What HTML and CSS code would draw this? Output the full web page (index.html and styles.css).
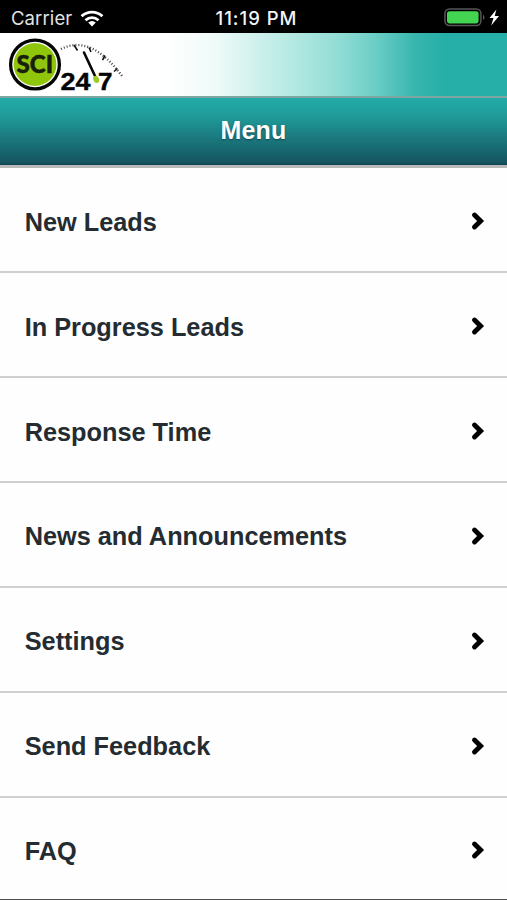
FILE: index.html
```html
<!DOCTYPE html>
<html lang="en">
<head>
<meta charset="utf-8">
<title>Menu</title>
<link rel="stylesheet" href="styles.css">
</head>
<body>
<div class="status">
  <div class="carrier">
    <span>Carrier</span>
    <svg width="24" height="17" viewBox="0 0 24 17" fill="none" stroke="#fff" stroke-width="2.9">
      <path d="M1.6 6.2C7.5.7 16.5.7 22.4 6.2"/>
      <path d="M5.5 10.2C9.3 6.7 14.7 6.7 18.5 10.2"/>
      <path d="M8.2 12.6Q12 9.4 15.8 12.6L12 16.5Z" fill="#fff" stroke="none"/>
    </svg>
  </div>
  <div class="time">11:19 PM</div>
  <div class="power">
    <svg width="56" height="20" viewBox="0 0 56 20">
      <rect x=".9" y="1" width="36" height="16.6" rx="4.5" fill="none" stroke="#555" stroke-width="1.5"/>
      <rect x="3" y="3.2" width="31.6" height="12.2" rx="2.3" fill="#43d551"/>
      <path d="M39 6.5Q42.2 9.3 39 12Z" fill="#555"/>
      <path d="M52.4 1.5L45.5 10.1H49.5L47.2 17.6L55 8H50.7Z" fill="#fff"/>
    </svg>
  </div>
</div>
<header class="brand">
  <svg width="130" height="63" viewBox="0 33 130 63">
    <circle cx="35" cy="64.5" r="24.4" fill="#fff" stroke="#050505" stroke-width="3.3"/>
    <circle cx="35" cy="64.5" r="21.4" fill="#8fc50a"/>
    <text class="logo-sci" x="34.7" y="73" text-anchor="middle" textLength="36.5" lengthAdjust="spacingAndGlyphs">SCI</text>
    <path class="dial" d="M61 49Q91 34 122 76"/>
    <path d="M74 45L77.5 50.5M89 47.5L91 52M105 55.5L102.5 60M117.5 68.5L114 71.5" stroke="#111" stroke-width="1.6"/>
    <path d="M84 52.5L95 76" stroke="#050505" stroke-width="2.6" stroke-linecap="round"/>
    <text class="logo-num" x="60.5" y="90" textLength="30" lengthAdjust="spacingAndGlyphs">24</text>
    <text class="logo-num" x="98" y="90" textLength="14.5" lengthAdjust="spacingAndGlyphs">7</text>
    <ellipse cx="96.2" cy="79.4" rx="2.8" ry="3.7" transform="rotate(-24 96.2 79.4)" fill="#9cc922"/>
  </svg>
</header>
<h1 class="title">Menu</h1>
<nav class="menu">
  <a class="item"><span>New Leads</span><svg class="chev" viewBox="0 0 14 20"><path d="M3.5 4L9.6 10L3.5 16"/></svg></a>
  <a class="item"><span>In Progress Leads</span><svg class="chev" viewBox="0 0 14 20"><path d="M3.5 4L9.6 10L3.5 16"/></svg></a>
  <a class="item"><span>Response Time</span><svg class="chev" viewBox="0 0 14 20"><path d="M3.5 4L9.6 10L3.5 16"/></svg></a>
  <a class="item"><span>News and Announcements</span><svg class="chev" viewBox="0 0 14 20"><path d="M3.5 4L9.6 10L3.5 16"/></svg></a>
  <a class="item"><span>Settings</span><svg class="chev" viewBox="0 0 14 20"><path d="M3.5 4L9.6 10L3.5 16"/></svg></a>
  <a class="item"><span>Send Feedback</span><svg class="chev" viewBox="0 0 14 20"><path d="M3.5 4L9.6 10L3.5 16"/></svg></a>
  <a class="item"><span>FAQ</span><svg class="chev" viewBox="0 0 14 20"><path d="M3.5 4L9.6 10L3.5 16"/></svg></a>
</nav>
</body>
</html>
```
FILE: styles.css
```css
* { box-sizing: border-box; }
body {
  margin: 0;
  height: 900px;
  overflow: hidden;
  display: flex;
  flex-direction: column;
  background: #fefefe;
  font-family: "Liberation Sans", Arial, sans-serif;
}
svg { display: block; flex: none; }
.status {
  height: 33px;
  flex: none;
  display: grid;
  grid-template-columns: 1fr auto 1fr;
  align-items: center;
  padding: 3px 7px 0 11px;
  background: #000;
  color: #fff;
  font: 18.5px/30px Inter, sans-serif;
}
.carrier { display: flex; align-items: center; gap: 8px; color: #e4e4e4; letter-spacing: .1px; }
.time { margin-left: 2px; font-weight: 500; font-size: 18.5px; letter-spacing: 1px; color: #f3f3f3; }
.power { display: flex; justify-content: flex-end; }
.brand {
  height: 63px;
  flex: none;
  background: linear-gradient(90deg, #fff 0, #fff 165px, #effbf9 215px, #c5eee9 270px, #92ddd6 338px, #6bcec6 375px, #37b6ae 415px, #25afa8 445px);
}
.logo-sci { font: 900 24px Lato, sans-serif; fill: #18200c; stroke: #18200c; stroke-width: .5px; }
.logo-num { font: bold 24px "Liberation Sans", sans-serif; fill: #050505; stroke: #050505; stroke-width: .4px; }
.dial { fill: none; stroke: #444; stroke-width: 2.4; stroke-dasharray: 1 2; }
.title {
  height: 72px;
  flex: none;
  margin: 0;
  border-top: 2px solid #80a5a5;
  border-bottom: 3px solid #b9b9b9;
  background: linear-gradient(#22aba8, #209d9b 25%, #155460 96%, #0d4453) padding-box;
  color: #fff;
  font-size: 25px;
  line-height: 65px;
  letter-spacing: .2px;
  text-align: center;
  text-shadow: 0 1px 2px #124550;
}
.menu { flex: 1; min-height: 0; display: flex; flex-direction: column; border-bottom: 1px solid #505050; }
.item {
  height: 104.85px;
  flex: none;
  display: flex;
  align-items: center;
  justify-content: space-between;
  padding: 3px 22px 0 24.7px;
  border-bottom: 2px solid #d0d0d0;
  color: #242c31;
  font-size: 25.3px;
  font-weight: bold;
}
.item:first-child { height: 105.3px; }
.item span { position: relative; top: 1px; }
.item:last-child { flex: 1 1 0; height: auto; min-height: 0; border-bottom: 0; padding-top: 4px; }
.chev { width: 14px; height: 20px; fill: none; stroke: #000; stroke-width: 4.9; stroke-linecap: round; stroke-linejoin: miter; }
```
